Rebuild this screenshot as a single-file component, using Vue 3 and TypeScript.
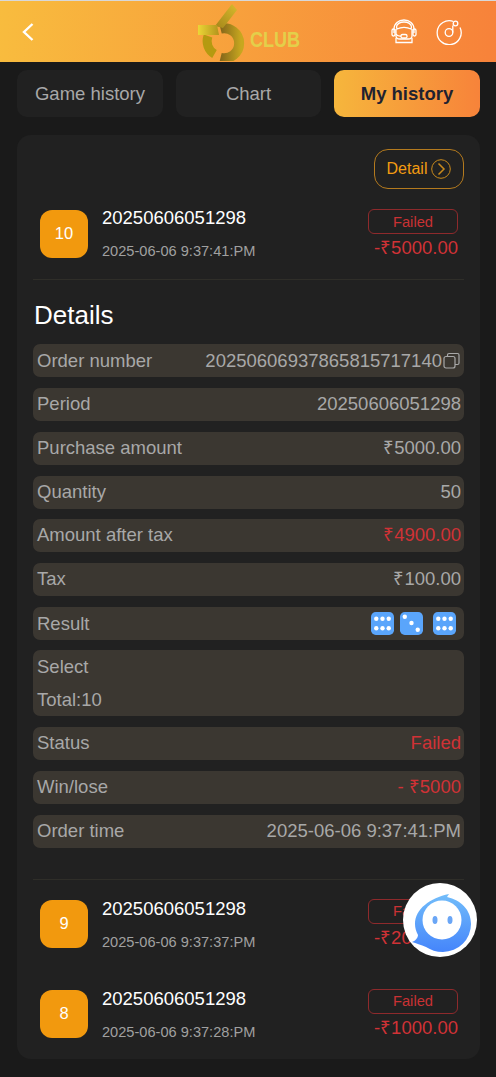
<script setup lang="ts">
interface Row { label: string; value: string; red?: boolean }
const rowsA: Row[] = [
  { label: 'Period', value: '20250606051298' },
  { label: 'Purchase amount', value: '₹5000.00' },
  { label: 'Quantity', value: '50' },
  { label: 'Amount after tax', value: '₹4900.00', red: true },
  { label: 'Tax', value: '₹100.00' },
]
const rowsB: Row[] = [
  { label: 'Status', value: 'Failed', red: true },
  { label: 'Win/lose', value: '- ₹5000', red: true },
  { label: 'Order time', value: '2025-06-06 9:37:41:PM' },
]
const lower = [
  { n: 9, time: '2025-06-06 9:37:37:PM', amount: '-₹2000.00' },
  { n: 8, time: '2025-06-06 9:37:28:PM', amount: '-₹1000.00' },
]
const six = [[5.5, 7], [12, 7], [18.5, 7], [5.5, 17], [12, 17], [18.5, 17]]
const three = [[5, 5], [12, 11.5], [18.5, 18.5]]
const dice = [six, three, six]
</script>

<template>
  <div class="page">
    <header class="header">
      <svg class="back" viewBox="0 0 14 20" width="14" height="20">
        <path d="M11.5 2 L3 10 L11.5 18" fill="none" stroke="#fff" stroke-width="2.4" />
      </svg>
      <div class="logo">
        <svg width="58" height="58" viewBox="0 0 58 58">
          <defs>
            <linearGradient id="lg1" x1="1" y1="0" x2="0" y2="1">
              <stop offset="0" stop-color="#d9bb2c" />
              <stop offset="1" stop-color="#a3851a" />
            </linearGradient>
            <linearGradient id="lg2" x1="0" y1="0" x2="1" y2="0">
              <stop offset="0" stop-color="#ecd636" />
              <stop offset="1" stop-color="#b3941c" />
            </linearGradient>
            <linearGradient id="lg3" gradientUnits="userSpaceOnUse" x1="22" y1="0" x2="44" y2="0">
              <stop offset="0" stop-color="#80621a" />
              <stop offset="1" stop-color="#c7a71f" />
            </linearGradient>
          </defs>
          <path d="M23.500 25.700 A15 15 0 1 1 23.500 54.800" fill="none" stroke="url(#lg3)" stroke-width="10" />
          <path d="M11 33 A15 15 0 0 0 17.500 51" fill="none" stroke="#b59a10" stroke-width="9" />
          <path d="M35 1 L40 7 L26 25 L18 23 Z" fill="url(#lg1)" />
          <path d="M1 22 H20 L22 32 H1 Z" fill="url(#lg2)" />
        </svg>
        <span class="club">CLUB</span>
      </div>
      <div class="actions">
        <svg width="26" height="26" viewBox="0 0 26 26" fill="none" stroke="#fff" stroke-width="1.3">
          <path d="M3 14 V10 C3 4.5 7.5 1 13 1 C18.500 1 23 4.500 23 10 V14" />
          <path d="M5.500 8 C5.500 5 9 3 13 3 C17 3 20.500 5 20.500 8 L20 10 C16 8 10 8 6 10 Z" />
          <rect x="1" y="10" width="3" height="7" rx="1.500" />
          <rect x="22" y="10" width="3" height="7" rx="1.500" />
          <path d="M5 10 V17 C5 19 7 20 9 20 H17 C19 20 21 19 21 17 V10" />
          <path d="M5 19 V23.500 H21 V19" />
          <rect x="10" y="15.500" width="6" height="3.500" rx="1.500" />
          <path d="M5 15 C6 17 8 17.200 10 17" />
        </svg>
        <svg width="26" height="26" viewBox="0 0 26 26" fill="none" stroke="#fff" stroke-width="1.300">
          <path d="M17.500 2.500 A12 12 0 1 0 24 8.500" />
          <circle cx="13" cy="13.500" r="3.800" />
          <path d="M16.800 13.500 V6.500" />
          <circle cx="19.500" cy="4.500" r="2.300" />
        </svg>
      </div>
    </header>

    <nav class="tabs">
      <div class="tab">Game history</div>
      <div class="tab">Chart</div>
      <div class="tab active">My history</div>
    </nav>

    <main class="card">
      <div class="detail-wrap">
        <div class="detail-btn">
          <span>Detail</span>
          <svg width="20" height="20" viewBox="0 0 20 20" fill="none" stroke="#c98a1c" stroke-width="1">
            <circle cx="10" cy="10" r="9.300" />
            <path d="M7.500 4.500 L13 10 L7.500 15.500" stroke-width="1.500" />
          </svg>
        </div>
      </div>

      <div class="item first">
        <div class="badge">10</div>
        <div class="info">
          <div class="title">20250606051298</div>
          <div class="time">2025-06-06 9:37:41:PM</div>
        </div>
        <div class="outcome">
          <div class="status">Failed</div>
          <div class="amount">-₹5000.00</div>
        </div>
      </div>

      <section class="details">
        <h2 class="details-title">Details</h2>
        <div class="rows">
          <div class="row order-row">
            <span>Order number</span>
            <span class="value order">
              <span>20250606937865815717140</span>
              <svg width="17" height="17" viewBox="0 0 17 17" fill="none" stroke="#a8a8a8" stroke-width="1.200">
                <rect x="1" y="4.500" width="11" height="11.500" rx="2" />
                <path d="M4.500 4.500 V3 C4.500 2 5 1.500 6 1.500 H14.500 C15.500 1.500 16 2 16 3 V11 C16 12 15.500 12.500 14.500 12.500 H12" />
              </svg>
            </span>
          </div>
          <div v-for="r in rowsA" :key="r.label" class="row">
            <span>{{ r.label }}</span>
            <span class="value" :class="{ red: r.red }">{{ r.value }}</span>
          </div>
          <div class="row result">
            <span>Result</span>
            <span class="dice">
              <svg v-for="(d, i) in dice" :key="i" class="die" width="23" height="23" viewBox="0 0 24 24">
                <rect x="0" y="0" width="24" height="24" rx="5" fill="#5aa5fb" />
                <circle v-for="(p, j) in d" :key="j" :cx="p[0]" :cy="p[1]" r="2.300" fill="#fff" />
              </svg>
            </span>
          </div>
          <div class="row select">
            <div>Select</div>
            <div>Total:10</div>
          </div>
          <div v-for="r in rowsB" :key="r.label" class="row">
            <span>{{ r.label }}</span>
            <span class="value" :class="{ red: r.red }">{{ r.value }}</span>
          </div>
        </div>
      </section>

      <div class="lower">
        <div v-for="it in lower" :key="it.n" class="item">
          <div class="badge">{{ it.n }}</div>
          <div class="info">
            <div class="title">20250606051298</div>
            <div class="time">{{ it.time }}</div>
          </div>
          <div class="outcome">
            <div class="status">Failed</div>
            <div class="amount">{{ it.amount }}</div>
          </div>
        </div>
      </div>
    </main>

    <div class="bubble">
      <svg width="74" height="74" viewBox="0 0 74 74">
        <defs>
          <linearGradient id="bub" x1="0" y1="0" x2="0" y2="1">
            <stop offset="0" stop-color="#72bdfa" />
            <stop offset="1" stop-color="#4585fb" />
          </linearGradient>
        </defs>
        <path d="M46 11 L44 14 C58 17 68 27 68 41 A28 28 0 0 1 40 69 C33 69 28 67 23 64 C18 62 13 60 9 59 C12 58 15 55 15 52 C13 48 12 45 12 41 C12 26 27 15 46 11 Z" fill="url(#bub)" />
        <circle cx="39" cy="37" r="19.500" fill="#fff" />
        <ellipse cx="32" cy="37" rx="2.500" ry="4" fill="#6aa6f6" />
        <ellipse cx="47" cy="37" rx="2.500" ry="4" fill="#6aa6f6" />
      </svg>
    </div>
  </div>
</template>

<style scoped>
.page {
  position: relative;
  width: 496px;
  height: 1077px;
  overflow: hidden;
  background: #1a1a1a;
  font-family: "Liberation Sans", Arial, sans-serif;
  border-top: 1px solid #d8d8d8;
  box-sizing: border-box;
}
.header {
  height: 61px;
  display: flex;
  align-items: center;
  justify-content: space-between;
  padding: 0 34px 0 21px;
  background: linear-gradient(94deg, #f8bc3e, #f7823a);
  position: relative;
}
.logo {
  position: absolute;
  left: 197px;
  top: 2px;
  display: flex;
  align-items: flex-end;
}
.club {
  display: inline-block;
  margin-left: -5px;
  margin-bottom: 10px;
  width: 50px;
  font-size: 22px;
  font-weight: 700;
  color: #e3cf4a;
  transform: scaleX(0.82);
  transform-origin: left center;
  line-height: 22px;
}
.actions {
  display: flex;
  gap: 19px;
  align-items: center;
}
.tabs {
  display: grid;
  grid-template-columns: 146px 145px 146px;
  gap: 13px;
  margin: 8px 16px 0 17px;
}
.tab {
  height: 47px;
  display: flex;
  align-items: center;
  justify-content: center;
  border-radius: 10px;
  background: #212121;
  color: #a8a8a8;
  font-size: 18.500px;
}
.tab.active {
  background: linear-gradient(90deg, #f6b63c, #f7833a);
  color: #1f2230;
  font-weight: 700;
}
.card {
  margin: 18px 16px 0 17px;
  height: 924px;
  padding: 14px 16px 0;
  box-sizing: border-box;
  background: #212121;
  border-radius: 14px;
}
.detail-wrap {
  display: flex;
  justify-content: flex-end;
}
.detail-btn {
  width: 90px;
  height: 40px;
  box-sizing: border-box;
  border: 1px solid #b47a1e;
  border-radius: 14px;
  display: flex;
  align-items: center;
  justify-content: center;
  gap: 4px;
  color: #f39c12;
  font-size: 16px;
}
.item {
  height: 90px;
  display: flex;
  align-items: flex-start;
  padding: 20px 6px 0 7px;
  box-sizing: border-box;
}
.item.first {
  height: 91px;
  padding-top: 21px;
  border-bottom: 1px solid #2f2e29;
}
.badge {
  width: 48px;
  height: 48px;
  flex: none;
  border-radius: 12px;
  background: #f2990e;
  color: #fff;
  display: flex;
  align-items: center;
  justify-content: center;
  font-size: 16.500px;
  padding-bottom: 1px;
  box-sizing: border-box;
}
.info {
  margin-left: 14px;
  flex: 1;
}
.title {
  color: #fff;
  font-size: 18.500px;
  line-height: 20px;
  margin-top: -1px;
}
.first .title {
  margin-top: -2px;
}
.time {
  color: #a0a0a0;
  font-size: 14.600px;
  line-height: 18px;
  margin-top: 14.500px;
}
.first .time {
  margin-top: 13.500px;
}
.outcome {
  display: flex;
  flex-direction: column;
  align-items: flex-end;
}
.status {
  width: 90px;
  height: 25px;
  box-sizing: border-box;
  margin-top: -1px;
  border: 1px solid #8e2a2c;
  border-radius: 6px;
  color: #c93234;
  font-size: 14.700px;
  display: flex;
  align-items: center;
  justify-content: center;
}
.amount {
  color: #d03236;
  font-size: 18.500px;
  line-height: 24px;
  margin-top: 2px;
}
.details-title {
  margin: 20px 0 0 1px;
  color: #fff;
  font-size: 26px;
  font-weight: 400;
  line-height: 30px;
}
.rows {
  margin-top: 14px;
  display: flex;
  flex-direction: column;
  gap: 10.850px;
}
.row {
  height: 33px;
  padding: 5px 3px 0 4px;
  box-sizing: border-box;
  display: flex;
  align-items: baseline;
  justify-content: space-between;
  background: #3b3731;
  border-radius: 7px;
  color: #a8a8a8;
  font-size: 18.500px;
  line-height: 22px;
}
.row.order-row {
  padding-top: 6px;
}
.row.result {
  align-items: center;
  padding-top: 0;
}
.row.select {
  display: block;
  height: 66px;
  padding-top: 2px;
  line-height: 30px;
  margin-top: -0.600px;
}
.row.select div {
  height: 33px;
}
.value.red {
  color: #d03236;
}
.order {
  display: flex;
  align-items: center;
  white-space: nowrap;
}
.order svg {
  margin: -2px 1px 0 1px;
}
.dice {
  display: flex;
  gap: 6px;
  padding-right: 5px;
}
.die:last-child {
  margin-left: 4px;
}
.lower {
  margin-top: 31px;
  border-top: 1px solid #2f2e29;
}
.bubble {
  position: absolute;
  left: 403px;
  top: 882px;
  width: 74px;
  height: 74px;
  border-radius: 50%;
  background: #fff;
}
</style>
